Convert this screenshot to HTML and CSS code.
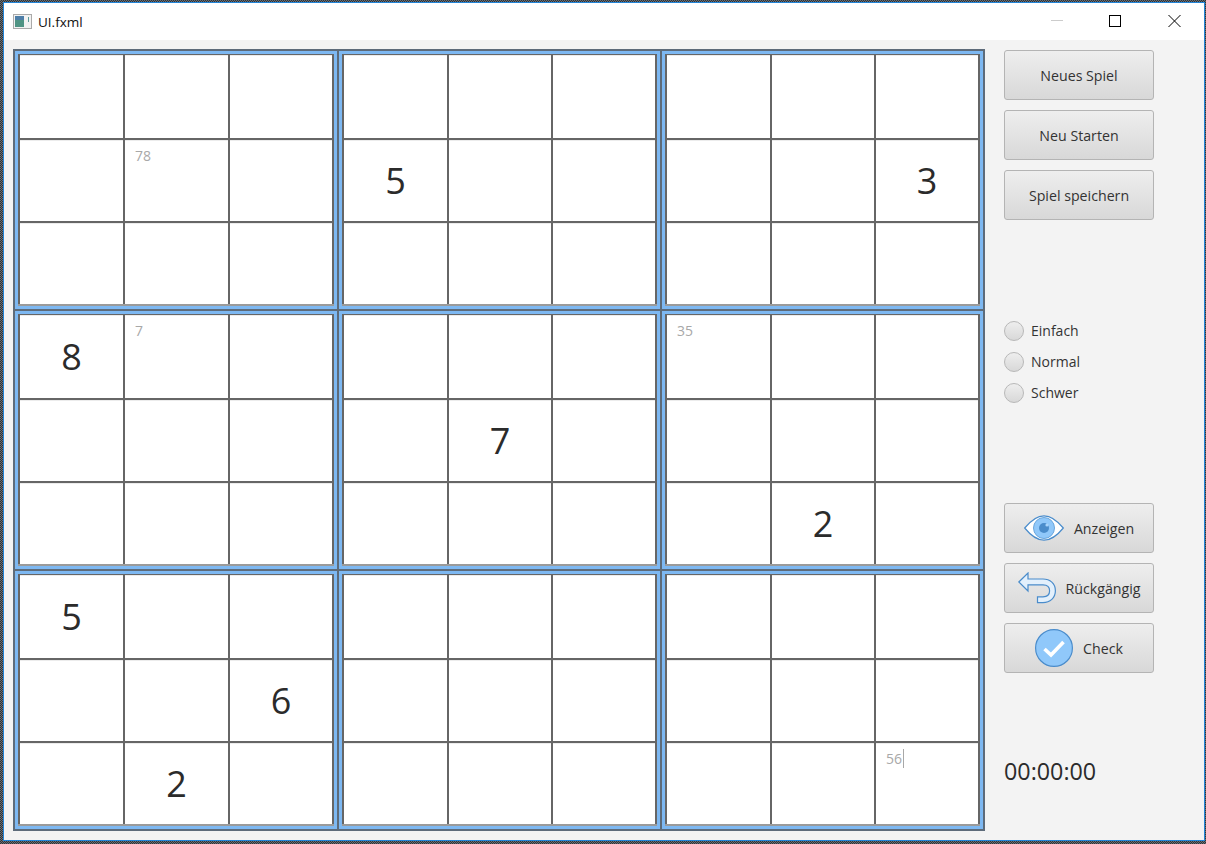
FILE: index.html
```html
<!DOCTYPE html>
<html lang="de">
<head>
  <meta charset="UTF-8">
  <title>UI.fxml</title>
  <link rel="stylesheet" href="styles.css">
</head>
<body>
  <div class="window">
    <div class="titlebar">
      <svg class="app-icon" width="20" height="16" viewBox="0 0 20 16">
        <rect x="0.5" y="0.5" width="18" height="14" fill="#f2f2f2" stroke="#aaa"/>
        <rect x="2" y="2" width="9" height="11" fill="#4f9484"/>
        <rect x="2" y="2" width="9" height="4" fill="#4d7ea8"/>
        <rect x="15" y="3" width="1" height="5" fill="#5a9a9a"/>
      </svg>
      <span class="title">UI.fxml</span>
      <div class="win-controls">
        <svg width="12" height="12" viewBox="0 0 12 12"><path d="M0 5.5H12" stroke="#ccc"/></svg>
        <svg width="12" height="12" viewBox="0 0 12 12"><rect x="0.5" y="0.5" width="11" height="11" fill="none" stroke="#000"/></svg>
        <svg class="win-close" width="13" height="12" viewBox="0 0 13 12"><path d="M0.5 0L12.5 12M12.5 0L0.5 12" stroke="#000"/></svg>
      </div>
    </div>

    <div class="content">
      <div class="board" id="board">
        <!-- Felder kommen aus app.js -->
      </div>

      <div class="sidebar">
        <div class="btn-group">
          <button class="btn">Neues Spiel</button>
          <button class="btn">Neu Starten</button>
          <button class="btn">Spiel speichern</button>
        </div>

        <div class="radio-group">
          <label class="radio"><span class="radio-dot"></span>Einfach</label>
          <label class="radio"><span class="radio-dot"></span>Normal</label>
          <label class="radio"><span class="radio-dot"></span>Schwer</label>
        </div>

        <div class="btn-group">
          <button class="btn">
            <svg width="40" height="26" viewBox="0 0 40 26">
              <path d="M0.7 13C8 4 14 0.8 20 0.8C26 0.8 32 4 39.3 13C32 22 26 25.2 20 25.2C14 25.2 8 22 0.7 13Z" fill="#fff" stroke="#4a8ccb" stroke-width="1.2"/>
              <circle cx="20" cy="13" r="10.5" fill="#90c8fa" stroke="#6aa6dc"/>
              <circle cx="20" cy="13" r="5" fill="#4a8ccb"/>
              <circle cx="23" cy="10" r="1.6" fill="#a9d4fb"/>
            </svg>
            Anzeigen
          </button>
          <button class="btn">
            <svg width="38" height="32" viewBox="0 0 38 32">
              <path d="M0.8 10L10 1V7H25C32 7 37.4 11.5 37.4 18.8C37.4 26 32 30.6 25 30.6H19.5V24.8H25C28.8 24.8 31.6 22.6 31.6 18.8C31.6 15 28.8 12.8 25 12.8H10V19Z" fill="#e3f0fc" stroke="#4a8ccb" stroke-width="1.2" stroke-linejoin="miter"/>
            </svg>
            Rückgängig
          </button>
          <button class="btn">
            <svg width="38" height="38" viewBox="0 0 38 38">
              <circle cx="19" cy="19" r="18.4" fill="#90c8fa" stroke="#4a8ccb" stroke-width="1.2"/>
              <path d="M9.5 20L16 26L28.5 13" fill="none" stroke="#fff" stroke-width="3.6"/>
            </svg>
            Check
          </button>
        </div>

        <div class="timer">00:00:00</div>
      </div>
    </div>
  </div>

  <script src="app.js"></script>
</body>
</html>
```

FILE: styles.css
```css
body {
  margin: 0;
  background: repeating-conic-gradient(#2e3338 0 25%, #6a6e72 0 50%) 0 0 / 2px 2px;
  font-family: "Open Sans", "Noto Sans", sans-serif;
  color: #333;
}

.window {
  width: 1200px;
  height: 837px;
  margin: 2px 0 0 3px;
  border: 1px solid #2284d8;
  background-color: #f3f3f3;
}

.titlebar {
  display: flex;
  align-items: center;
  height: 37px;
  padding-left: 9px;
  background-color: #fff;
}

.app-icon {
  margin-right: 5px;
}

.title {
  font-size: 13.5px;
  color: #111;
}

.win-controls {
  display: flex;
  gap: 46px;
  margin-left: auto;
  margin-right: 23px;
  margin-bottom: 1px;
}

.win-close {
  margin-left: 1px;
}

.content {
  display: flex;
  padding: 9px;
}

/* sudoku */
.board {
  display: grid;
  grid-template-columns: 322px 321px 321px;
  grid-template-rows: repeat(3, 258px);
  gap: 2px;
  padding: 2px;
  background-color: #5d6b7a;
}

.box {
  display: grid;
  grid-template-columns: 103px 102px 1fr;
  grid-template-rows: 83px 81px 81px;
  gap: 2px;
  margin: 3px;
  padding: 1px 2px 0;
  border-bottom: 2px solid #9a9a9a;
  background-color: #666;
  box-shadow: 0 0 0 3px #7db8f2;
}

.box:nth-child(3n+1) {
  grid-template-columns: 103px 103px 1fr;
}

.cell {
  position: relative;
  display: flex;
  align-items: center;
  justify-content: center;
  background-color: #fff;
  box-shadow: inset 0 1px 0 #ececec;
  font-size: 36px;
  font-weight: 400;
  color: #2b2b2b;
}

.hint {
  position: absolute;
  top: 6px;
  left: 10px;
  font-size: 14px;
  color: #a8a8a8;
}

.hint.caret {
  padding-right: 1px;
  border-right: 1px solid #a8a8a8;
}

/* rechte spalte */
.sidebar {
  display: flex;
  flex-direction: column;
  margin-left: 19px;
  padding-top: 1px;
}

.btn-group {
  display: flex;
  flex-direction: column;
  gap: 10px;
}

.btn {
  display: flex;
  align-items: center;
  justify-content: center;
  gap: 10px;
  width: 150px;
  height: 50px;
  padding: 0;
  border: 1px solid #b4b4b4;
  border-radius: 3px;
  background: linear-gradient(#eeeeee, #d8d8d8);
  font-family: inherit;
  font-size: 14.2px;
  color: #333;
}

.radio-group {
  display: flex;
  flex-direction: column;
  gap: 11px;
  margin: 101px 0 100px;
}

.radio {
  display: flex;
  align-items: center;
  gap: 7px;
  height: 20px;
  font-size: 14px;
  line-height: 18px;
}

.radio-dot {
  width: 18px;
  height: 18px;
  border: 1px solid #b8b8b8;
  border-radius: 50%;
  background: linear-gradient(#eeeeee, #d8d8d8);
}

.timer {
  margin-top: 82px;
  font-size: 23.3px;
  color: #2b2b2b;
}
```

FILE: app.js
```js
// index der felder: 0-8 pro block, zeilenweise
const digits = {
  1: { 3: 5 },
  2: { 5: 3 },
  3: { 0: 8 },
  4: { 4: 7 },
  5: { 7: 2 },
  6: { 0: 5, 5: 6, 7: 2 }
};

const hints = {
  0: { 4: 78 },
  3: { 1: 7 },
  5: { 0: 35 },
  8: { 8: 56 }
};

const board = document.getElementById("board");

for (let b = 0; b < 9; b++) {
  const box = document.createElement("div");
  box.className = "box";

  for (let c = 0; c < 9; c++) {
    const cell = document.createElement("div");
    cell.className = "cell";

    if (digits[b] && digits[b][c]) {
      cell.textContent = digits[b][c];
    }

    if (hints[b] && hints[b][c]) {
      const hint = document.createElement("span");
      hint.className = b === 8 ? "hint caret" : "hint";
      hint.textContent = hints[b][c];
      cell.appendChild(hint);
    }

    box.appendChild(cell);
  }

  board.appendChild(box);
}
```
